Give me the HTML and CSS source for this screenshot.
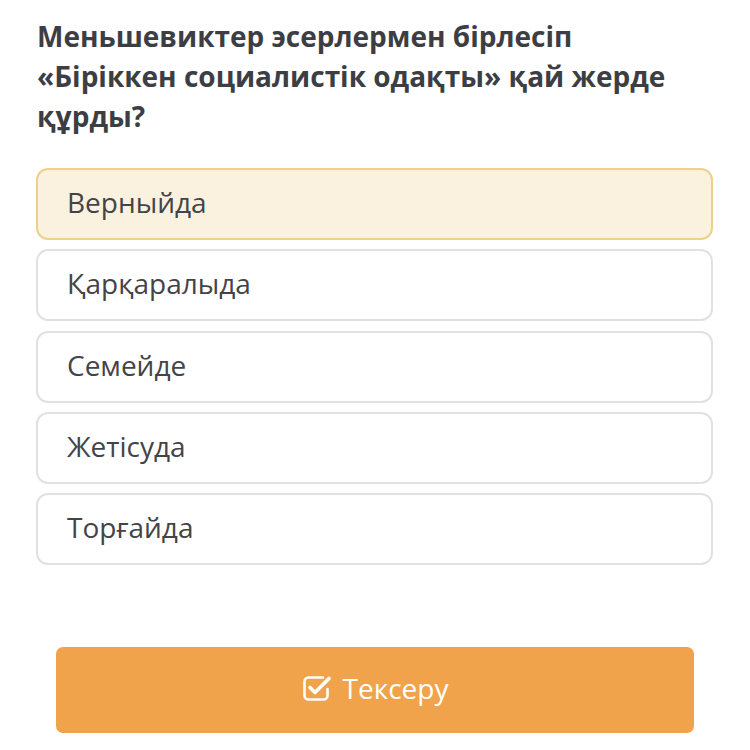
FILE: index.html
```html
<!DOCTYPE html>
<html lang="kk">
<head>
<meta charset="utf-8">
<link rel="stylesheet" href="styles.css">
</head>
<body>
<div class="page">
  <h1 class="question">Меньшевиктер эсерлермен бірлесіп «Біріккен социалистік одақты» қай жерде құрды?</h1>
  <div class="options">
    <div class="option selected">Верныйда</div>
    <div class="option">Қарқаралыда</div>
    <div class="option">Семейде</div>
    <div class="option">Жетісуда</div>
    <div class="option">Торғайда</div>
  </div>
  <div class="actions">
    <button class="check">
      <svg class="icon" width="30" height="30" viewBox="0 0 30 30" fill="none">
        <path d="M21 5.5 H6.5 A4 4 0 0 0 2.5 9.5 V23.5 A4 4 0 0 0 6.5 27.5 H21.5 A4 4 0 0 0 25.5 23.5 V17" stroke="#fff" stroke-width="2.6" stroke-linecap="round"/>
        <path d="M8 15.5 L13 20.5 L27 6.5" stroke="#fff" stroke-width="3.6" stroke-linecap="round" stroke-linejoin="round"/>
      </svg>
      <span>Тексеру</span>
    </button>
  </div>
</div>
</body>
</html>
```

FILE: styles.css
```css
html, body {
  margin: 0;
  padding: 0;
  background: #fff;
}
body {
  font-family: "Open Sans", "Noto Sans", sans-serif;
  color: #444448;
}
.page {
  width: 677px;
  padding: 16px 0 0 36px;
}
.question {
  margin: 0 0 32px 1px;
  font-size: 28px;
  line-height: 40px;
  font-weight: 700;
  color: #3d3e44;
  width: 660px;
}
.options {
  display: flex;
  flex-direction: column;
  gap: 9.25px;
}
.option {
  box-sizing: border-box;
  height: 72px;
  border: 2px solid #e1e1e1;
  border-radius: 12px;
  padding: 0 0 4px 29px;
  display: flex;
  align-items: center;
  font-size: 28px;
  color: #444448;
  background: #fff;
}
.option.selected {
  background: #faf2df;
  border-color: #ecd189;
}
.actions {
  padding: 82px 19px 0 20px;
}
.check {
  width: 638px;
  height: 86px;
  border: none;
  border-radius: 7px;
  background: #f0a34a;
  color: #fff;
  font-family: "Open Sans", "Noto Sans", sans-serif;
  font-size: 28px;
  display: flex;
  align-items: center;
  justify-content: center;
  gap: 11px;
  padding: 0 0 4px 0;
}
.icon {
  display: block;
  margin-top: -2px;
}
```
